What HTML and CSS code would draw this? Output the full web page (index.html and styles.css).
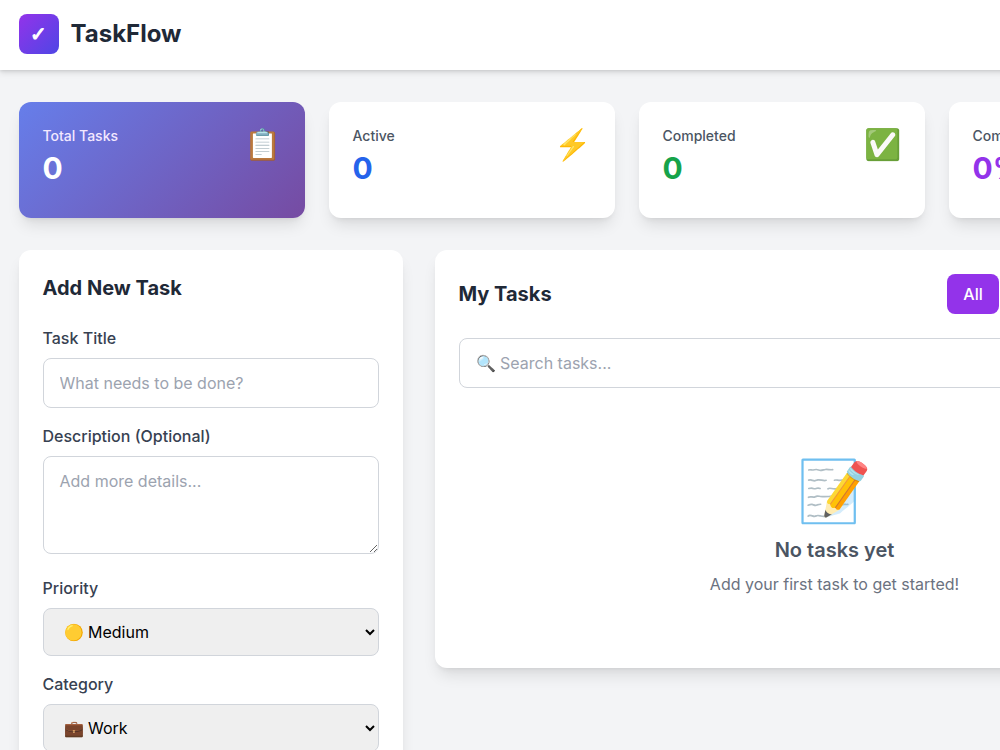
FILE: index.html
```html
<!DOCTYPE html>
<html lang="en">
<head>
<meta charset="utf-8">
<meta name="viewport" content="width=device-width, initial-scale=1">
<title>TaskFlow</title>
<link rel="stylesheet" href="styles.css">
</head>
<body>
<header class="topbar">
  <div class="container brand">
    <div class="brand-mark">✓</div>
    <h1 class="brand-name">TaskFlow</h1>
  </div>
</header>

<main class="container page">
  <section class="stats">
    <article class="card stat stat-total">
      <div>
        <p class="stat-label">Total Tasks</p>
        <p class="stat-value">0</p>
      </div>
      <span class="stat-icon">📋</span>
    </article>
    <article class="card stat">
      <div>
        <p class="stat-label">Active</p>
        <p class="stat-value blue">0</p>
      </div>
      <span class="stat-icon">⚡</span>
    </article>
    <article class="card stat">
      <div>
        <p class="stat-label">Completed</p>
        <p class="stat-value green">0</p>
      </div>
      <span class="stat-icon">✅</span>
    </article>
    <article class="card stat">
      <div>
        <p class="stat-label">Completion</p>
        <p class="stat-value purple">0%</p>
      </div>
    </article>
  </section>

  <div class="columns">
    <section class="card">
      <h2 class="card-title form-title">Add New Task</h2>
      <form class="task-form">
        <div class="field">
          <label for="title">Task Title</label>
          <input class="control" id="title" type="text" placeholder="What needs to be done?">
        </div>
        <div class="field field-area">
          <label for="details">Description (Optional)</label>
          <textarea class="control" id="details" rows="3" placeholder="Add more details..."></textarea>
        </div>
        <div class="field">
          <label for="priority">Priority</label>
          <select class="control" id="priority"><option>🟡 Medium</option></select>
        </div>
        <div class="field">
          <label for="category">Category</label>
          <select class="control" id="category"><option>💼 Work</option></select>
        </div>
      </form>
    </section>

    <section class="card tasks">
      <div class="tasks-head">
        <h2 class="card-title">My Tasks</h2>
        <div class="filters">
          <button class="filter selected" type="button">All</button>
          <button class="filter" type="button">Active</button>
          <button class="filter" type="button">Completed</button>
        </div>
      </div>
      <input class="control" type="search" aria-label="Search tasks" placeholder="🔍 Search tasks...">
      <div class="empty">
        <div class="empty-icon">📝</div>
        <h3 class="empty-title">No tasks yet</h3>
        <p class="empty-text">Add your first task to get started!</p>
      </div>
    </section>
  </div>
</main>
</body>
</html>
```
FILE: styles.css
```css
* {
  box-sizing: border-box;
  margin: 0;
}

html {
  overflow-x: hidden;
}

body {
  min-width: 1253px;
  background: #f3f4f6;
  color: #1f2937;
  font-family: Inter, "Liberation Sans", sans-serif;
  font-size: 16px;
  line-height: 24px;
}

.container {
  max-width: 1216px;
  margin-inline: auto;
}

.topbar {
  background: #fff;
  box-shadow: 0 3px 6px rgba(0, 0, 0, 0.1), 0 1px 3px rgba(0, 0, 0, 0.1);
}

.brand {
  display: flex;
  align-items: center;
  gap: 12px;
  padding-block: 14px 16px;
}

.brand-mark {
  display: grid;
  place-items: center;
  width: 40px;
  height: 40px;
  border-radius: 8px;
  background: linear-gradient(to bottom right, #9333ea, #4f46e5);
  color: #fff;
  font-family: "DejaVu Sans", sans-serif;
  font-size: 20px;
  font-weight: 700;
  line-height: 28px;
  -webkit-text-stroke: 1px #fff;
}

.brand-name {
  font-size: 24px;
  font-weight: 700;
  line-height: 32px;
}

.page {
  display: grid;
  gap: 32px;
  padding-block: 32px;
}

.card {
  padding: 24px;
  border-radius: 12px;
  background: #fff;
  box-shadow: 0 10px 15px -3px rgba(0, 0, 0, 0.1), 0 4px 6px -4px rgba(0, 0, 0, 0.1);
}

.stats {
  display: grid;
  grid-template-columns: repeat(4, 1fr);
  gap: 24px;
}

.stat {
  display: flex;
  align-items: flex-start;
  justify-content: space-between;
  min-height: 116px;
}

.stat-total {
  background: linear-gradient(135deg, #667eea 0%, #764ba2 100%);
}

.stat-label {
  color: #4b5563;
  font-size: 14px;
  font-weight: 500;
  line-height: 20px;
  margin-bottom: 4px;
}

.stat-total .stat-label {
  color: #f3e8ff;
}

.stat-value {
  font-size: 30px;
  font-weight: 700;
  line-height: 36px;
}

.stat-total .stat-value {
  color: #fff;
}

.blue {
  color: #2563eb;
}

.green {
  color: #16a34a;
}

.purple {
  color: #9333ea;
}

.stat-icon {
  font-size: 30px;
  line-height: 36px;
}

.columns {
  display: grid;
  grid-template-columns: repeat(3, 1fr);
  gap: 32px;
  align-items: start;
}

.tasks {
  grid-column: span 2;
}

.card-title {
  font-size: 20px;
  font-weight: 700;
  line-height: 28px;
}

.form-title {
  margin-bottom: 24px;
}

.task-form {
  display: grid;
  gap: 16px;
}

.field {
  display: grid;
  gap: 8px;
}

.field-area {
  padding-bottom: 6px;
}

.field label {
  color: #374151;
  font-weight: 500;
}

.control {
  display: block;
  width: 100%;
  padding: 12px 16px;
  border: 1px solid #d1d5db;
  border-radius: 8px;
  font: inherit;
}

.control::placeholder {
  color: #9ca3af;
}

input.control {
  height: 50px;
  appearance: none;
}

textarea.control {
  resize: vertical;
}

select.control {
  height: 48px;
  background: #efefef;
  color: #000;
}

.tasks-head {
  display: flex;
  align-items: center;
  justify-content: space-between;
  margin-bottom: 24px;
}

.filters {
  display: flex;
  gap: 8px;
}

.filter {
  padding: 8px 16px;
  border: 0;
  border-radius: 8px;
  background: #e5e7eb;
  color: #374151;
  font: inherit;
  font-weight: 500;
}

.filter.selected {
  background: #9333ea;
  color: #fff;
}

.empty {
  margin-top: 24px;
  padding-block: 48px;
  text-align: center;
}

.empty-icon {
  font-size: 60px;
  line-height: 60px;
  margin-bottom: 16px;
}

.empty-title {
  color: #4b5563;
  font-size: 20px;
  font-weight: 600;
  line-height: 28px;
  margin-bottom: 8px;
}

.empty-text {
  color: #6b7280;
}
```
